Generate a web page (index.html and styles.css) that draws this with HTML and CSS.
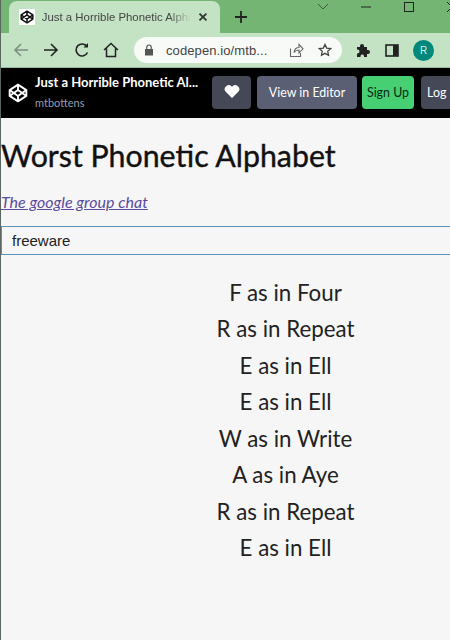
FILE: index.html
```html
<!DOCTYPE html>
<html lang="en">
<head>
    <meta charset="UTF-8">
    <meta name="viewport" content="width=device-width, initial-scale=1.0">
    <title>Just a Horrible Phonetic Alphabet</title>
    <link rel="stylesheet" href="styles.css">
</head>
<body>
    <!-- Browser tabs -->
    <div class="tabstrip">
        <div class="tab">
            <span class="favicon">
                <svg width="14" height="14" viewBox="0 0 24 24" fill="none" stroke="#111" stroke-width="2.6" stroke-linejoin="round"><path d="M12 2 22 8.500v7L12 22 2 15.500v-7z"/><path d="M12 2v6.500M12 15.500V22M2 8.500l10 7 10-7M2 15.500l10-7 10 7"/></svg>
            </span>
            <span class="tab-title">Just a Horrible Phonetic Alpha</span>
            <svg class="tab-close" width="10" height="10" viewBox="0 0 10 10" stroke="#333" stroke-width="1.800"><path d="M1.500 1.500l7 7M8.500 1.500l-7 7"/></svg>
        </div>
        <svg class="new-tab" width="14" height="14" viewBox="0 0 14 14" stroke="#222" stroke-width="1.800"><path d="M7 1v12M1 7h12"/></svg>
        <div class="window-btns">
            <svg width="12" height="12" viewBox="0 0 12 12" fill="none" stroke="#3c5a3c" stroke-width="1"><path d="M1 3l5 5 5-5"/></svg>
            <svg width="12" height="12" viewBox="0 0 12 12" fill="none" stroke="#222" stroke-width="1"><path d="M1 6h10"/></svg>
            <svg width="12" height="12" viewBox="0 0 12 12" fill="none" stroke="#222" stroke-width="1"><rect x="1.500" y="1.500" width="9" height="9"/></svg>
            <svg width="12" height="12" viewBox="0 0 12 12" fill="none" stroke="#222" stroke-width="1"><path d="M1 1l10 10M11 1 1 11"/></svg>
        </div>
    </div>

    <!-- Browser toolbar -->
    <div class="toolbar">
        <svg width="16" height="16" viewBox="0 0 16 16" fill="none" stroke="#7d8f83" stroke-width="1.600"><path d="M15 8H2M8 2 2 8l6 6"/></svg>
        <svg width="16" height="16" viewBox="0 0 16 16" fill="none" stroke="#222" stroke-width="1.600"><path d="M1 8h13M8 2l6 6-6 6"/></svg>
        <svg class="reload" width="16" height="16" viewBox="0 0 16 16" fill="none" stroke="#222" stroke-width="1.600"><path d="M13.500 10.500A6 6 0 1 1 13 4.500"/><path d="M14 1v4.500H9.500" fill="#222" stroke="none"/></svg>
        <svg width="16" height="16" viewBox="0 0 16 16" fill="none" stroke="#222" stroke-width="1.500"><path d="M1 8l7-6.500L15 8M3.500 6.500V14.500h9V6.500"/></svg>
        <div class="omnibox">
            <svg width="10" height="12" viewBox="0 0 10 12"><path d="M1 5h8v6.500H1z" fill="#555"/><path d="M2.800 5V3.200a2.200 2.200 0 0 1 4.400 0V5" fill="none" stroke="#555" stroke-width="1.200"/></svg>
            <span class="url">codepen.io/mtb...</span>
            <svg class="share" width="15" height="14" viewBox="0 0 15 14" fill="none" stroke="#666" stroke-width="1.100"><path d="M1.500 5.500v8h10V10M5 9.500C5.500 6 8 4.500 10 4.500V1.500l4 4.300-4 4V7C8 7 6.500 7.500 5 9.500z"/></svg>
            <svg class="star" width="14" height="14" viewBox="0 0 24 24" fill="none" stroke="#444" stroke-width="2.200"><path d="M12 2.500l2.900 6.300 6.900.8-5.100 4.700 1.400 6.800-6.100-3.400-6.100 3.400 1.400-6.800L2.200 9.600l6.900-.8z"/></svg>
        </div>
        <svg width="15" height="15" viewBox="0 0 15 15" fill="#222"><path d="M1 4h3V3a2 2 0 0 1 4 0v1h3v3h1a2 2 0 0 1 0 4h-1v3H8v-1a1.800 1.800 0 0 0-3.500 0v1H1v-3.500h.5a2 2 0 0 0 0-4H1z"/></svg>
        <svg width="14" height="13" viewBox="0 0 14 13"><rect x="1" y="1" width="12" height="11" fill="none" stroke="#222" stroke-width="1.600"/><rect x="8" y="1" width="5" height="11" fill="#222"/></svg>
        <span class="avatar">R</span>
    </div>

    <!-- CodePen bar -->
    <div class="penbar">
        <svg class="pen-logo" width="20" height="20" viewBox="0 0 24 24" fill="none" stroke="#fff" stroke-width="2.300" stroke-linejoin="round"><path d="M12 2 22 8.500v7L12 22 2 15.500v-7z"/><path d="M12 2v6.500M12 15.500V22M2 8.500l10 7 10-7M2 15.500l10-7 10 7"/></svg>
        <div class="pen-info">
            <div class="pen-title">Just a Horrible Phonetic Al...</div>
            <div class="pen-author">mtbottens</div>
        </div>
        <button class="btn btn-heart" type="button">
            <svg width="16" height="14" viewBox="0 0 16 14" fill="#fff"><path d="M8 14 1.500 7.500A4 4 0 0 1 8 2.800a4 4 0 0 1 6.500 4.700z"/></svg>
        </button>
        <button class="btn btn-editor" type="button">View in Editor</button>
        <button class="btn btn-signup" type="button">Sign Up</button>
        <button class="btn btn-login" type="button">Log In</button>
    </div>

    <!-- Pen output -->
    <div class="page">
        <h1>Worst Phonetic Alphabet</h1>
        <p class="sub"><a href="#">The google group chat</a></p>
        <input class="word" type="text" value="freeware">
        <div class="letters">
            <p>F as in Four</p>
            <p>R as in Repeat</p>
            <p>E as in Ell</p>
            <p>E as in Ell</p>
            <p>W as in Write</p>
            <p>A as in Aye</p>
            <p>R as in Repeat</p>
            <p>E as in Ell</p>
        </div>
    </div>
</body>
</html>
```

FILE: styles.css
```css
html, body {
    margin: 0;
    height: 640px;
    overflow: hidden;
}
body {
    width: 450px;
    box-sizing: border-box;
    border-left: 1px solid #5c6660;
    background-color: #f6f6f6;
    font-family: "Liberation Sans", Arial, sans-serif;
    color: #222;
}
.tabstrip {
    height: 33px;
    background-color: #74b574;
    display: flex;
    align-items: flex-end;
}
.tab {
    width: 211px;
    height: 32px;
    margin-left: 8px;
    padding: 0 12px 0 11px;
    box-sizing: border-box;
    background-color: #c4e2c4;
    border-radius: 8px 8px 0 0;
    display: flex;
    align-items: center;
    font-size: 11.400px;
}
.favicon {
    width: 16px;
    height: 16px;
    margin-left: -1px;
    background: white;
    display: flex;
    align-items: center;
    justify-content: center;
}
.tab-title {
    margin-left: 7px;
    width: 151px;
    white-space: nowrap;
    overflow: hidden;
    color: #444;
    -webkit-mask-image: linear-gradient(to right, black 85%, transparent);
    mask-image: linear-gradient(to right, black 85%, transparent);
}
.tab-close {
    margin-left: 7px;
}
.new-tab {
    margin: 0 0 9px 14px;
}
.window-btns {
    margin-left: auto;
    margin-right: -8px;
    align-self: flex-start;
    padding-top: 1px;
    display: flex;
    gap: 31px;
}
.toolbar {
    height: 34px;
    background-color: #c4e2c4;
    border-bottom: 1px solid #9db59d;
    display: flex;
    align-items: center;
    padding-left: 12px;
    gap: 14px;
}
.reload {
    margin-left: 1px;
    margin-right: -1px;
}
.omnibox {
    width: 208px;
    height: 26px;
    margin-left: 1px;
    padding: 0 10px;
    box-sizing: border-box;
    background: #f8faf8;
    border-radius: 13px;
    display: flex;
    align-items: center;
    font-size: 13px;
    color: #444;
}
.url {
    margin-left: 12px;
    letter-spacing: 0.100px;
}
.share {
    margin-left: auto;
}
.star {
    margin-left: 14px;
}
.avatar {
    width: 21px;
    height: 21px;
    border-radius: 50%;
    background: #00897b;
    color: #d8efe9;
    font-size: 10px;
    display: flex;
    align-items: center;
    justify-content: center;
}
.penbar {
    height: 50px;
    background: #000;
    display: flex;
    align-items: center;
    white-space: nowrap;
}
.pen-logo {
    margin-left: 7px;
    flex: none;
}
.pen-info {
    margin-left: 7px;
    width: 177px;
    flex: none;
    margin-top: -3px;
    font-family: Lato, sans-serif;
}
.pen-title {
    font-size: 13px;
    font-weight: 700;
    color: #fff;
}
.pen-author {
    font-size: 11px;
    color: #9a9db0;
    margin-top: 6px;
}
.btn {
    height: 33px;
    margin-top: -1px;
    border: none;
    border-radius: 4px;
    font-family: Lato, sans-serif;
    font-size: 12.400px;
    color: #fff;
    padding: 0;
    flex: none;
    cursor: pointer;
}
.btn-heart {
    width: 39px;
    background: #444857;
}
.btn-editor {
    width: 100px;
    margin-left: 6px;
    background: #5a5f73;
}
.btn-signup {
    width: 52px;
    margin-left: 5px;
    background: #47cf73;
    color: #0a2a14;
}
.btn-login {
    width: 56px;
    margin-left: 7px;
    background: #444857;
    text-align: left;
    padding-left: 6px;
}
.page {
    width: 569px;
    font-family: Lato, sans-serif;
    color: #111;
}
h1 {
    margin: 0;
    padding-top: 18px;
    font-size: 30.300px;
    font-weight: 400;
    line-height: 38px;
    -webkit-text-stroke: 0.4px #111;
}
.sub {
    margin: 18px 0 0;
    font-size: 16px;
    font-style: italic;
    line-height: 20px;
}
.sub a {
    color: #5b4a9e;
}
.word {
    display: block;
    width: 100%;
    height: 29px;
    margin-top: 14px;
    padding: 0 10px;
    box-sizing: border-box;
    border: 1px solid #5b93b8;
    background: #f6f6f6;
    font-family: "Liberation Sans", Arial, sans-serif;
    font-size: 15px;
    color: #222;
}
.letters {
    margin-top: 20px;
    text-align: center;
}
.letters p {
    margin: 0;
    font-size: 22.300px;
    line-height: 36.450px;
    color: #222;
}
```
